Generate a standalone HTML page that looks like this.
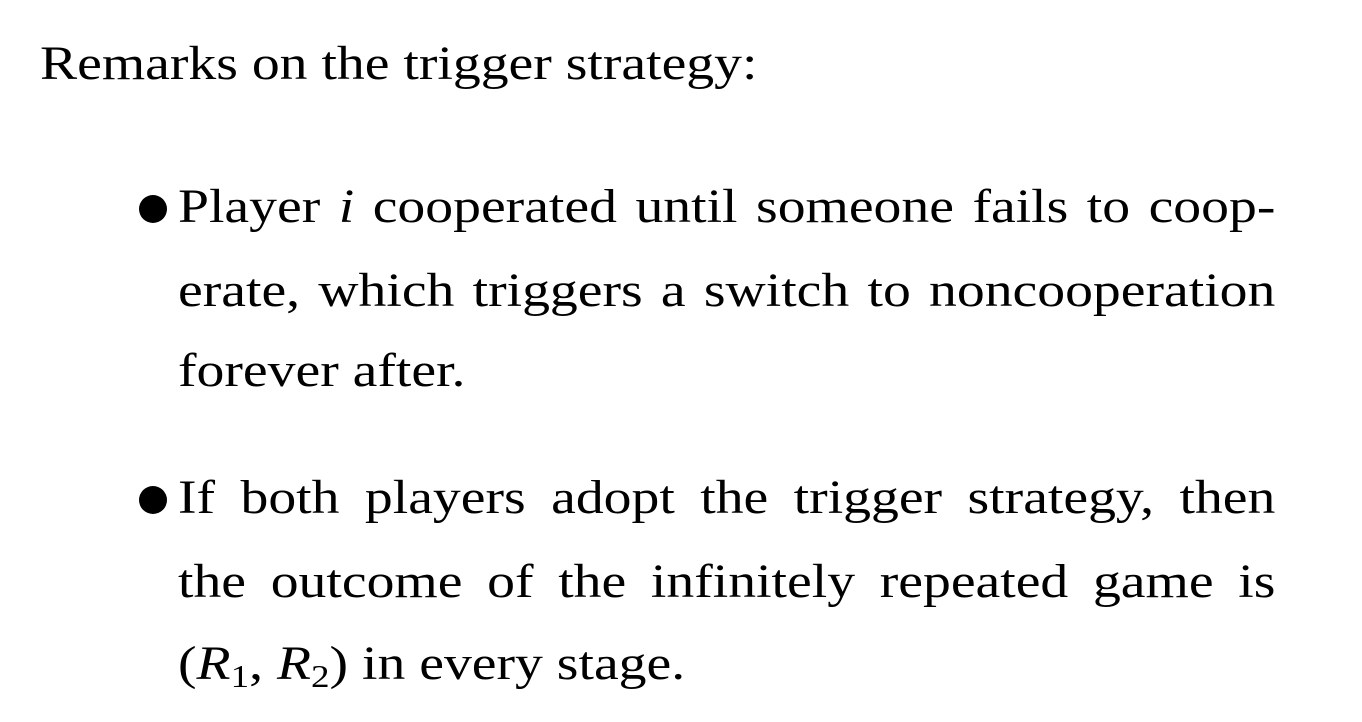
<!DOCTYPE html>
<html><head><meta charset="utf-8"><style>
html,body{margin:0;padding:0;background:#fff;}
body{width:1362px;height:722px;position:relative;overflow:hidden;font-family:"Liberation Serif",serif;font-size:48px;color:#000;}
.l{position:absolute;line-height:48px;white-space:nowrap;transform:scaleX(1.16);transform-origin:0 0;}
.j{width:946px;left:178px;text-align:justify;text-align-last:justify;}
.b{position:absolute;width:28px;height:28px;border-radius:50%;background:#000;left:139px;}
i{font-style:italic;}
sub{font-size:32px;vertical-align:-8px;line-height:0;}
</style></head><body>
<div class="l" style="left:40px;top:40px;">Remarks on the trigger strategy:</div>
<div class="b" style="top:195px;"></div>
<div class="l j" style="top:183px;">Player <i>i</i> cooperated until someone fails to coop-</div>
<div class="l j" style="top:267px;">erate, which triggers a switch to noncooperation</div>
<div class="l" style="left:178px;top:347px;">forever after.</div>
<div class="b" style="top:486px;"></div>
<div class="l j" style="top:474px;">If both players adopt the trigger strategy, then</div>
<div class="l j" style="top:558px;">the outcome of the infinitely repeated game is</div>
<div class="l" style="left:178px;top:640px;">(<i>R</i><sub>1</sub>, <i>R</i><sub>2</sub>) in every stage.</div>
</body></html>
